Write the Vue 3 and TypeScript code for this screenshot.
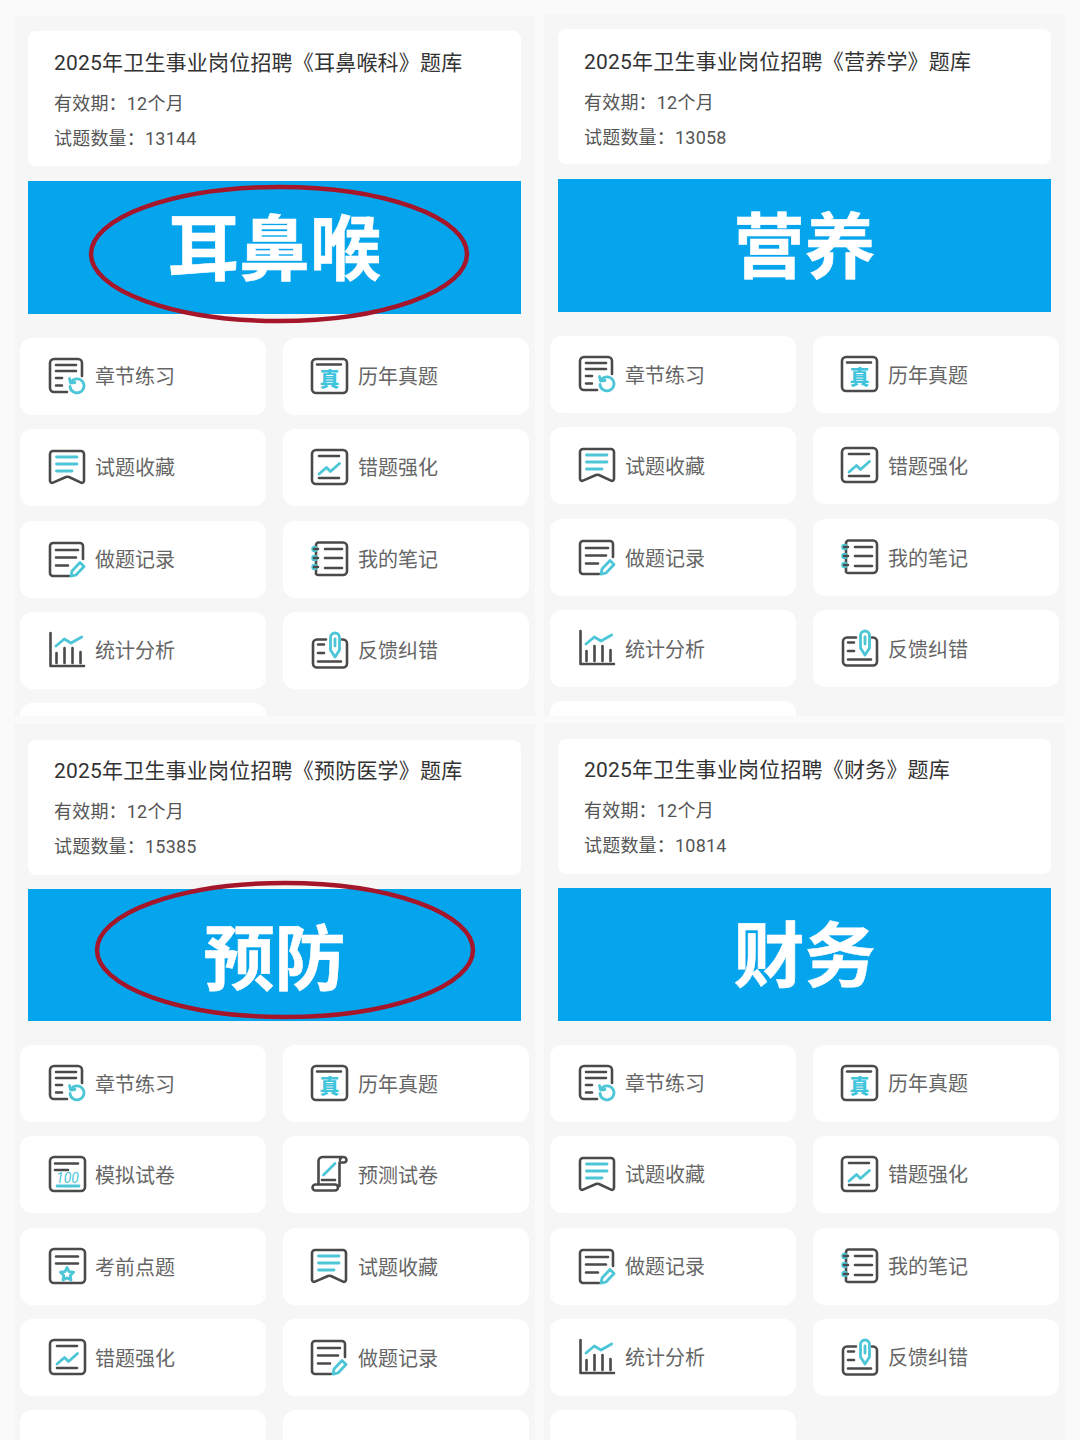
<script setup lang="ts">
interface Icon {
  dark: string
  teal?: string
  dots?: boolean
  text?: string
}
interface Panel {
  name: string
  count: number
  banner: string
  shift?: string
  ring?: string
  items: string[]
}

// the boxes all share one outline, only the inner strokes change
const box = 'M5 1H32a4 4 0 0 1 4 4V31a4 4 0 0 1-4 4H5a4 4 0 0 1-4-4V5a4 4 0 0 1 4-4Z'

const icons: Record<string, Icon> = {
  章节练习: {
    dark: 'M33 18V5a4 4 0 0 0-4-4H5a4 4 0 0 0-4 4V30a4 4 0 0 0 4 4H18M7 7H27M7 13H27M7 20H13M7 27.5H13',
    teal: 'M22.5 23.5a7 7 0 1 1-1.5 5M20.5 20.5L21.5 25L26 24.5'
  },
  历年真题: {
    dark: box + 'M6 6.5H30',
    text: '真'
  },
  试题收藏: {
    dark: 'M1 5a3 3 0 0 1 3-3H32a3 3 0 0 1 3 3V32a2 2 0 0 1-3 1.6L20 28a4 4 0 0 0-3 0L4 33.6A2 2 0 0 1 1 32Z',
    teal: 'M7.5 8H28M7.5 15H28M7.5 22H23'
  },
  错题强化: {
    dark: box + 'M8 7H28M8 29H28',
    teal: 'M8 25L15.5 18.5L19.5 22.5L28.5 14.5'
  },
  做题记录: {
    dark: 'M34 18V5a3 3 0 0 0-3-3H4a3 3 0 0 0-3 3V32a3 3 0 0 0 3 3H20M7 9H29M7 16.5H27M7 24.5H19',
    teal: 'M31 21.5L35 25.5L27 34L22 35.2L23 30Z'
  },
  我的笔记: {
    dark: 'M7 1.5H32a4 4 0 0 1 4 4V30a4 4 0 0 1-4 4H7a3 3 0 0 1-2-1V4a3 3 0 0 1 2-2.5M14 8H31M14 17H31M14 27H31',
    dots: true
  },
  统计分析: {
    dark: 'M1.5 1V34H35M7.5 21V31M15.5 16V31M23.5 16V31M31.5 20V31',
    teal: 'M7 14L15.3 7L22 11L32.7 5'
  },
  反馈纠错: {
    dark: 'M15 7.5H6a4 4 0 0 0-4 4V31.5a4 4 0 0 0 4 4H32a4 4 0 0 0 4-4V11.5a4 4 0 0 0-4-4H31M7 12.5H13M7 21H13M7 29.5H30',
    teal: 'M19.5 5.5a4.5 4.5 0 0 1 9 0V18L24 25L19.5 18ZM24 7V14'
  },
  模拟试卷: {
    dark: box + 'M6 7.5H29M6 14H19',
    teal: 'M8 30H30',
    text: '100'
  },
  预测试卷: {
    dark: 'M7.5 28V5a4 4 0 0 1 4-4H32.5a3 3 0 0 1 3 3a2.5 2.5 0 0 1-2.5 2.5H28.5V30M29 4a3 3 0 0 1 3-3M4.5 28.5H24a3 3 0 0 1 0 6H4.5a3 3 0 0 1 0-6ZM11 24H24',
    teal: 'M24 7.5L12.5 19'
  },
  考前点题: {
    dark: box + 'M7 8.5H29M7 15.5H29',
    teal: 'M18 19.5L20 23.6L24.5 24.2L21.2 27.4L22 32L18 29.8L14 32L14.8 27.4L11.5 24.2L16 23.6Z'
  }
}

const common = ['章节练习', '历年真题', '试题收藏', '错题强化', '做题记录', '我的笔记', '统计分析', '反馈纠错', '']

const panels: Panel[] = [
  { name: '耳鼻喉科', count: 13144, banner: '耳鼻喉', ring: 'ring-a', items: common },
  { name: '营养学', count: 13058, banner: '营养', shift: 'shift-top', items: common },
  {
    name: '预防医学',
    count: 15385,
    banner: '预防',
    ring: 'ring-b',
    items: ['章节练习', '历年真题', '模拟试卷', '预测试卷', '考前点题', '试题收藏', '错题强化', '做题记录', '', '']
  },
  { name: '财务', count: 10814, banner: '财务', shift: 'shift-bottom', items: common }
]
</script>

<template>
  <div class="page">
    <section v-for="panel in panels" :key="panel.name" class="panel" :class="panel.shift">
      <div class="info">
        <h3 class="title">2025年卫生事业岗位招聘《{{ panel.name }}》题库</h3>
        <p class="line first">有效期：12个月</p>
        <p class="line">试题数量：{{ panel.count }}</p>
      </div>
      <div class="banner">
        <span class="word">{{ panel.banner }}</span>
        <svg v-if="panel.ring" class="ring" :class="panel.ring" viewBox="0 0 384 140">
          <ellipse cx="192" cy="70" rx="188" ry="67" />
        </svg>
      </div>
      <div class="menu">
        <div v-for="(item, i) in panel.items" :key="i" class="item">
          <template v-if="item">
            <svg class="icon" viewBox="0 0 37 37">
              <path class="dark" :d="icons[item].dark" />
              <path v-if="icons[item].teal" class="teal" :d="icons[item].teal" />
              <g v-if="icons[item].dots">
                <circle class="dot" cx="3.5" cy="8" r="3.2" />
                <circle class="dot" cx="3.5" cy="17" r="3.2" />
                <circle class="dot" cx="3.5" cy="26" r="3.2" />
                <path class="dark" d="M3 8H7M3 17H7M3 26H7" />
              </g>
              <text v-if="icons[item].text === '真'" class="zhen" x="18.5" y="29" text-anchor="middle">真</text>
              <text v-if="icons[item].text === '100'" class="hundred" x="18.5" y="27" text-anchor="middle">100</text>
            </svg>
            <span class="label">{{ item }}</span>
          </template>
        </div>
      </div>
    </section>
  </div>
</template>

<style scoped>
.page {
  width: 1080px;
  height: 1440px;
  box-sizing: border-box;
  overflow: hidden;
  padding: 16px 0 0 14px;
  background: #fafafa;
  display: grid;
  grid-template-columns: 521px 521px;
  grid-template-rows: 700px 716px;
  column-gap: 9px;
  row-gap: 8px;
  font-family: Roboto, "Noto Sans CJK SC", sans-serif;
}
.panel {
  background: #f6f6f6;
  padding: 15px 6px 0;
  box-sizing: border-box;
  overflow: hidden;
}
.panel:nth-child(n + 3) {
  padding-top: 16px;
}
.panel:nth-child(n + 3) .banner {
  margin-top: 14px;
}
.panel:nth-child(n + 3) .info {
  padding-top: 17px;
}
.panel:nth-child(3) .banner {
  height: 132px;
}
.panel:nth-child(3) .word {
  margin-top: 8px;
}
.panel:nth-child(3) .label,
.shift-top .label {
  margin-bottom: 0;
}
.shift-top {
  margin-top: -2px;
}
.shift-top .info {
  padding-top: 19px;
}
.shift-bottom {
  margin-top: -1px;
}
.info {
  height: 135px;
  box-sizing: border-box;
  margin: 0 8px;
  padding: 18px 26px 0;
  background: #fff;
  border-radius: 8px;
}
.title {
  margin: 0;
  font-size: 21px;
  line-height: 28px;
  font-weight: 400;
  letter-spacing: 0.2px;
  color: #333;
  white-space: nowrap;
}
.line {
  margin: 7px 0 0;
  font-size: 18px;
  line-height: 28px;
  letter-spacing: 0.2px;
  color: #555;
}
.line.first {
  margin-top: 13px;
}
.banner {
  position: relative;
  height: 133px;
  margin: 15px 8px 0;
  background: #05a5ee;
  display: flex;
  align-items: center;
  justify-content: center;
  color: #fff;
  font-size: 71px;
  font-weight: 700;
  line-height: 1;
}
.word {
  margin-top: 4px;
  -webkit-text-stroke: 0.6px #fff;
}
.ring {
  position: absolute;
  width: 384px;
  height: 140px;
  overflow: visible;
}
.ring ellipse {
  fill: none;
  stroke: #a5162a;
  stroke-width: 4.5;
}
.ring-a {
  left: 59px;
  top: 3px;
}
.ring-b {
  left: 65px;
  top: -9px;
}
.menu {
  margin-top: 24px;
  display: grid;
  grid-template-columns: 246px 246px;
  column-gap: 17px;
  row-gap: 14.33px;
}
.item {
  height: 77px;
  box-sizing: border-box;
  padding-left: 28px;
  background: #fff;
  border-radius: 12px;
  display: flex;
  align-items: center;
  gap: 10px;
}
.item:nth-child(odd) {
  padding-left: 29px;
  gap: 9px;
}
.icon {
  width: 37px;
  height: 37px;
  flex: none;
  overflow: visible;
}
.dark,
.teal {
  fill: none;
  stroke-linecap: round;
  stroke-linejoin: round;
}
.dark {
  stroke: #4a4a4a;
  stroke-width: 2.6;
}
.teal {
  stroke: #4cc6d6;
  stroke-width: 2.8;
}
.dot {
  fill: #4cc6d6;
}
.zhen {
  fill: #3fc4dc;
  font-size: 20px;
  font-weight: 900;
}
.hundred {
  fill: #4cc6d6;
  font-size: 14px;
  font-style: italic;
}
.label {
  margin-bottom: 2px;
  font-size: 20px;
  color: #666;
  white-space: nowrap;
}
</style>
